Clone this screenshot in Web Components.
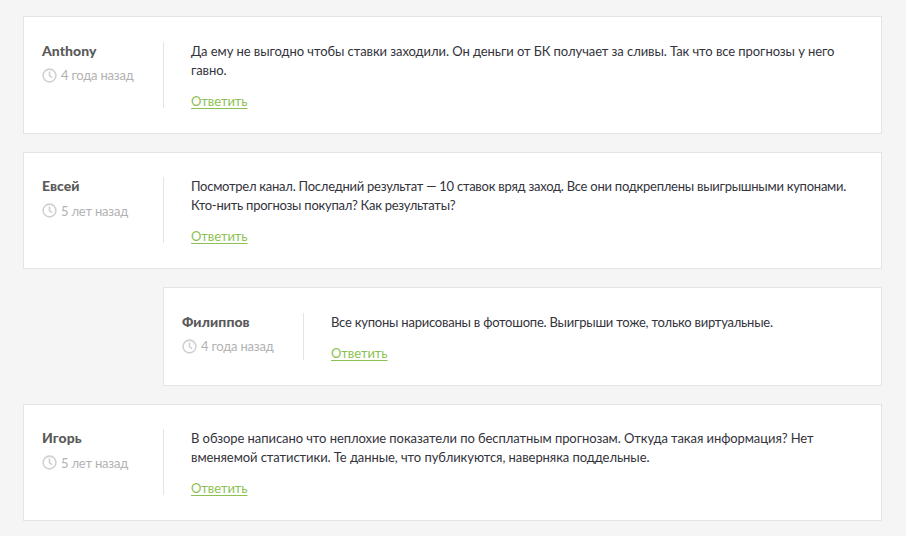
<!DOCTYPE html>
<html lang="ru"><head><meta charset="utf-8"><style>
html,body{margin:0;background:#f5f5f5}
body{height:536px;overflow:hidden;font-family:Lato,"Liberation Sans",sans-serif}
</style></head><body>
<comment-list>
<comment-card author="Anthony" time="4 года назад">Да ему не выгодно чтобы ставки заходили. Он деньги от БК получает за сливы. Так что все прогнозы у него гавно.</comment-card>
<comment-card style="--ls:-.25px" author="Евсей" time="5 лет назад">Посмотрел канал. Последний результат — 10 ставок вряд заход. Все они подкреплены выигрышными купонами. Кто-нить прогнозы покупал? Как результаты?</comment-card>
<comment-card style="--ls:-.22px" reply author="Филиппов" time="4 года назад">Все купоны нарисованы в фотошопе. Выигрыши тоже, только виртуальные.</comment-card>
<comment-card author="Игорь" time="5 лет назад">В обзоре написано что неплохие показатели по бесплатным прогнозам. Откуда такая информация? Нет вменяемой статистики. Те данные, что публикуются, наверняка поддельные.</comment-card>
</comment-list>
<script>
class CommentList extends HTMLElement{constructor(){
	super();
	this.attachShadow({mode:"open"}).innerHTML=`<style>
	:host{display:flex;flex-direction:column;gap:17.9px;padding:16.3px 24px 0 23px}
	</style><slot></slot>`;
}}
class CommentCard extends HTMLElement{constructor(){
	super();
	this.attachShadow({mode:"open"}).innerHTML=`<style>
	:host{display:flex;background:#fff;border:1px solid #e4e4e4;padding:24.4px 18px 25.2px;font-size:13px;line-height:19px;color:#33333b}
	:host([reply]){margin-left:140px}
	.meta{width:121px;flex:none;border-right:1px solid #e4e4e4}
	.name{font-weight:900;font-size:14px;color:#5a5a5a;line-height:17px;letter-spacing:.05px}
	.time{display:flex;align-items:center;gap:4px;margin-top:6.6px;color:#b2b2b2;line-height:20px;letter-spacing:-.2px}
	svg{width:15px;height:15px;flex:none}
	.body{padding-left:27px;flex:1;letter-spacing:var(--ls,-.07px)}
	p{margin:0}
	a{display:block;width:fit-content;margin-top:14px;line-height:14px;color:#8cc152;text-decoration:underline;text-underline-offset:2px;letter-spacing:-.07px}
	</style>
	<div class="meta"><div class="name"></div><div class="time"><svg viewBox="0 0 15 15" fill="none" stroke="#d0d0d0" stroke-width="1.6"><circle cx="7.5" cy="7.5" r="6.4"/><path d="M7.5 3.6V7.8L10.2 9.6"/></svg><span></span></div></div>
	<div class="body"><p><slot></slot></p><a href="#">Ответить</a></div>`;
	this.shadowRoot.querySelector(".name").textContent=this.getAttribute("author");
	this.shadowRoot.querySelector(".time span").textContent=this.getAttribute("time");
}}
customElements.define("comment-list",CommentList);
customElements.define("comment-card",CommentCard);
</script></body></html>
